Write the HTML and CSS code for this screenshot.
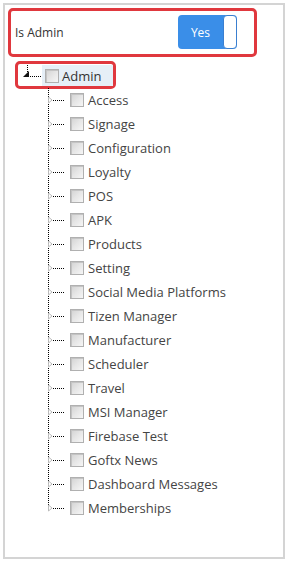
FILE: index.html
```html
<!DOCTYPE html>
<html>
<head>
<meta charset="utf-8">
<link rel="stylesheet" href="styles.css">
</head>
<body>
<div class="panel">
  <div class="admin-row">
    <span class="admin-label">Is Admin</span>
    <div class="toggle">
      <span class="toggle-on">Yes</span>
      <span class="toggle-knob"></span>
    </div>
  </div>
  <div class="tree">
    <div class="root">
      <svg class="root-conn" width="24" height="22" viewBox="0 0 24 22">
        <line x1="9.5" y1="1" x2="9.5" y2="8" stroke="#000" stroke-dasharray="1 1"/>
        <polygon points="11,7 11,13 5,13" fill="#111"/>
        <line x1="12" y1="12.5" x2="23" y2="12.5" stroke="#000" stroke-dasharray="1 1"/>
      </svg>
      <span class="root-node"><span class="cb"></span><span class="root-label">Admin</span></span>
    </div>
    <ul class="children">
      <li><svg class="conn" width="22" height="24" viewBox="0 0 22 24"><line x1="0.5" y1="0" x2="0.5" y2="24" stroke="#000" stroke-dasharray="1 1"/><polygon points="0.5,9 0.5,15 4,12" fill="#fff" stroke="#bbb"/><line x1="5" y1="12.5" x2="16" y2="12.5" stroke="#000" stroke-dasharray="1 1"/></svg><span class="cb"></span><span class="label">Access</span></li>
      <li><svg class="conn" width="22" height="24" viewBox="0 0 22 24"><line x1="0.5" y1="0" x2="0.5" y2="24" stroke="#000" stroke-dasharray="1 1"/><polygon points="0.5,9 0.5,15 4,12" fill="#fff" stroke="#bbb"/><line x1="5" y1="12.5" x2="16" y2="12.5" stroke="#000" stroke-dasharray="1 1"/></svg><span class="cb"></span><span class="label">Signage</span></li>
      <li><svg class="conn" width="22" height="24" viewBox="0 0 22 24"><line x1="0.5" y1="0" x2="0.5" y2="24" stroke="#000" stroke-dasharray="1 1"/><polygon points="0.5,9 0.5,15 4,12" fill="#fff" stroke="#bbb"/><line x1="5" y1="12.5" x2="16" y2="12.5" stroke="#000" stroke-dasharray="1 1"/></svg><span class="cb"></span><span class="label">Configuration</span></li>
      <li><svg class="conn" width="22" height="24" viewBox="0 0 22 24"><line x1="0.5" y1="0" x2="0.5" y2="24" stroke="#000" stroke-dasharray="1 1"/><polygon points="0.5,9 0.5,15 4,12" fill="#fff" stroke="#bbb"/><line x1="5" y1="12.5" x2="16" y2="12.5" stroke="#000" stroke-dasharray="1 1"/></svg><span class="cb"></span><span class="label">Loyalty</span></li>
      <li><svg class="conn" width="22" height="24" viewBox="0 0 22 24"><line x1="0.5" y1="0" x2="0.5" y2="24" stroke="#000" stroke-dasharray="1 1"/><polygon points="0.5,9 0.5,15 4,12" fill="#fff" stroke="#bbb"/><line x1="5" y1="12.5" x2="16" y2="12.5" stroke="#000" stroke-dasharray="1 1"/></svg><span class="cb"></span><span class="label">POS</span></li>
      <li><svg class="conn" width="22" height="24" viewBox="0 0 22 24"><line x1="0.5" y1="0" x2="0.5" y2="24" stroke="#000" stroke-dasharray="1 1"/><polygon points="0.5,9 0.5,15 4,12" fill="#fff" stroke="#bbb"/><line x1="5" y1="12.5" x2="16" y2="12.5" stroke="#000" stroke-dasharray="1 1"/></svg><span class="cb"></span><span class="label">APK</span></li>
      <li><svg class="conn" width="22" height="24" viewBox="0 0 22 24"><line x1="0.5" y1="0" x2="0.5" y2="24" stroke="#000" stroke-dasharray="1 1"/><polygon points="0.5,9 0.5,15 4,12" fill="#fff" stroke="#bbb"/><line x1="5" y1="12.5" x2="16" y2="12.5" stroke="#000" stroke-dasharray="1 1"/></svg><span class="cb"></span><span class="label">Products</span></li>
      <li><svg class="conn" width="22" height="24" viewBox="0 0 22 24"><line x1="0.5" y1="0" x2="0.5" y2="24" stroke="#000" stroke-dasharray="1 1"/><polygon points="0.5,9 0.5,15 4,12" fill="#fff" stroke="#bbb"/><line x1="5" y1="12.5" x2="16" y2="12.5" stroke="#000" stroke-dasharray="1 1"/></svg><span class="cb"></span><span class="label">Setting</span></li>
      <li><svg class="conn" width="22" height="24" viewBox="0 0 22 24"><line x1="0.5" y1="0" x2="0.5" y2="24" stroke="#000" stroke-dasharray="1 1"/><polygon points="0.5,9 0.5,15 4,12" fill="#fff" stroke="#bbb"/><line x1="5" y1="12.5" x2="16" y2="12.5" stroke="#000" stroke-dasharray="1 1"/></svg><span class="cb"></span><span class="label">Social Media Platforms</span></li>
      <li><svg class="conn" width="22" height="24" viewBox="0 0 22 24"><line x1="0.5" y1="0" x2="0.5" y2="24" stroke="#000" stroke-dasharray="1 1"/><polygon points="0.5,9 0.5,15 4,12" fill="#fff" stroke="#bbb"/><line x1="5" y1="12.5" x2="16" y2="12.5" stroke="#000" stroke-dasharray="1 1"/></svg><span class="cb"></span><span class="label">Tizen Manager</span></li>
      <li><svg class="conn" width="22" height="24" viewBox="0 0 22 24"><line x1="0.5" y1="0" x2="0.5" y2="24" stroke="#000" stroke-dasharray="1 1"/><polygon points="0.5,9 0.5,15 4,12" fill="#fff" stroke="#bbb"/><line x1="5" y1="12.5" x2="16" y2="12.5" stroke="#000" stroke-dasharray="1 1"/></svg><span class="cb"></span><span class="label">Manufacturer</span></li>
      <li><svg class="conn" width="22" height="24" viewBox="0 0 22 24"><line x1="0.5" y1="0" x2="0.5" y2="24" stroke="#000" stroke-dasharray="1 1"/><polygon points="0.5,9 0.5,15 4,12" fill="#fff" stroke="#bbb"/><line x1="5" y1="12.5" x2="16" y2="12.5" stroke="#000" stroke-dasharray="1 1"/></svg><span class="cb"></span><span class="label">Scheduler</span></li>
      <li><svg class="conn" width="22" height="24" viewBox="0 0 22 24"><line x1="0.5" y1="0" x2="0.5" y2="24" stroke="#000" stroke-dasharray="1 1"/><polygon points="0.5,9 0.5,15 4,12" fill="#fff" stroke="#bbb"/><line x1="5" y1="12.5" x2="16" y2="12.5" stroke="#000" stroke-dasharray="1 1"/></svg><span class="cb"></span><span class="label">Travel</span></li>
      <li><svg class="conn" width="22" height="24" viewBox="0 0 22 24"><line x1="0.5" y1="0" x2="0.5" y2="24" stroke="#000" stroke-dasharray="1 1"/><polygon points="0.5,9 0.5,15 4,12" fill="#fff" stroke="#bbb"/><line x1="5" y1="12.5" x2="16" y2="12.5" stroke="#000" stroke-dasharray="1 1"/></svg><span class="cb"></span><span class="label">MSI Manager</span></li>
      <li><svg class="conn" width="22" height="24" viewBox="0 0 22 24"><line x1="0.5" y1="0" x2="0.5" y2="24" stroke="#000" stroke-dasharray="1 1"/><polygon points="0.5,9 0.5,15 4,12" fill="#fff" stroke="#bbb"/><line x1="5" y1="12.5" x2="16" y2="12.5" stroke="#000" stroke-dasharray="1 1"/></svg><span class="cb"></span><span class="label">Firebase Test</span></li>
      <li><svg class="conn" width="22" height="24" viewBox="0 0 22 24"><line x1="0.5" y1="0" x2="0.5" y2="24" stroke="#000" stroke-dasharray="1 1"/><polygon points="0.5,9 0.5,15 4,12" fill="#fff" stroke="#bbb"/><line x1="5" y1="12.5" x2="16" y2="12.5" stroke="#000" stroke-dasharray="1 1"/></svg><span class="cb"></span><span class="label">Goftx News</span></li>
      <li><svg class="conn" width="22" height="24" viewBox="0 0 22 24"><line x1="0.5" y1="0" x2="0.5" y2="24" stroke="#000" stroke-dasharray="1 1"/><polygon points="0.5,9 0.5,15 4,12" fill="#fff" stroke="#bbb"/><line x1="5" y1="12.5" x2="16" y2="12.5" stroke="#000" stroke-dasharray="1 1"/></svg><span class="cb"></span><span class="label">Dashboard Messages</span></li>
      <li><svg class="conn" width="22" height="24" viewBox="0 0 22 24"><line x1="0.5" y1="0" x2="0.5" y2="12" stroke="#000" stroke-dasharray="1 1"/><polygon points="0.5,9 0.5,15 4,12" fill="#fff" stroke="#bbb"/><line x1="5" y1="12.5" x2="16" y2="12.5" stroke="#000" stroke-dasharray="1 1"/></svg><span class="cb"></span><span class="label">Memberships</span></li>
    </ul>
  </div>
</div>
</body>
</html>
```
FILE: styles.css
```css
* { box-sizing: border-box; }
html, body { margin: 0; padding: 0; background: #fff; }
body {
  font-family: "Open Sans", "Liberation Sans", sans-serif;
  color: #444;
}
.panel {
  margin: 3px 0 0 3px;
  width: 282px;
  height: 556px;
  border: 2px solid #d4d4d4;
  padding: 3px;
}
.admin-row {
  width: 249px;
  height: 49px;
  border: 3px solid #e0383e;
  border-radius: 5px;
  display: flex;
  align-items: center;
  justify-content: space-between;
  padding: 0 17px 1px 4px;
}
.admin-label {
  font-size: 12px;
  color: #333;
}
.toggle {
  width: 59px;
  height: 34px;
  border-radius: 4px;
  background: #3a8ee8;
  display: flex;
  align-items: stretch;
  overflow: hidden;
}
.toggle-on {
  flex: 1;
  display: flex;
  align-items: center;
  justify-content: center;
  color: #fff;
  font-size: 12px;
}
.toggle-knob {
  width: 14px;
  background: #fff;
  border: 1px solid #3a7fd0;
  border-radius: 4px;
}
.tree {
  margin: 4px 0 0 7px;
}
.root {
  width: 101px;
  height: 28px;
  border: 3px solid #e0383e;
  border-radius: 5px;
  display: flex;
  align-items: flex-start;
}
.root-conn { display: block; flex: none; }
.root-node {
  margin-top: 1px;
  height: 21px;
  background: #e6eff7;
  display: flex;
  align-items: center;
  gap: 3px;
  padding: 0 4px 0 3px;
  flex: 1;
}
.root-label {
  font-size: 13px;
  color: #333;
}
.cb {
  display: block;
  flex: none;
  width: 14px;
  height: 14px;
  border: 1px solid #b0b0b0;
  background: linear-gradient(135deg, #d2d2d2 0%, #e6e6e6 50%, #f6f6f6 100%);
  box-shadow: inset 1px 1px 0 #c4c4c4;
}
.children {
  list-style: none;
  margin: -1px 0 0 33px;
  padding: 0;
}
.children li {
  height: 24px;
  display: flex;
  align-items: center;
}
.conn { display: block; flex: none; }
.label {
  margin-left: 4px;
  font-size: 13px;
  color: #444;
}
```
